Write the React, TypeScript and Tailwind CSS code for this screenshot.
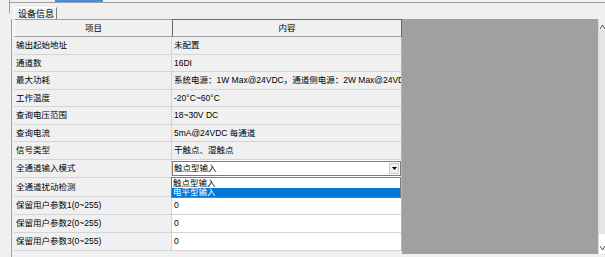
import React from "react";

const rows: { label: string; value: string; h: number; white?: boolean; combo?: boolean }[] = [
  { label: "输出起始地址", value: "未配置", h: 18 },
  { label: "通道数", value: "16DI", h: 17 },
  { label: "最大功耗", value: "系统电源：1W Max@24VDC，通道侧电源：2W Max@24VDC", h: 18 },
  { label: "工作温度", value: "-20°C~60°C", h: 17 },
  { label: "查询电压范围", value: "18~30V DC", h: 18 },
  { label: "查询电流", value: "5mA@24VDC 每通道", h: 17 },
  { label: "信号类型", value: "干触点、湿触点", h: 18 },
  { label: "全通道输入模式", value: "触点型输入", h: 18, white: true, combo: true },
  { label: "全通道扰动检测", value: "", h: 19, white: true },
  { label: "保留用户参数1(0~255)", value: "0", h: 18, white: true },
  { label: "保留用户参数2(0~255)", value: "0", h: 18, white: true },
  { label: "保留用户参数3(0~255)", value: "0", h: 18, white: true },
];

export default function App() {
  return (
    <div className="w-[605px] h-[257px] overflow-hidden bg-[#f0f0f0] text-black text-[8.5px] leading-none font-['Liberation_Sans','Noto_Sans_CJK_SC',sans-serif] flex flex-col">
      {/* top lines */}
      <div className="h-[2px] flex shrink-0">
        <div className="w-[9px]" />
        <div className="w-px bg-[#a0a0a0]" />
        <div className="w-[45px]" />
        <div className="w-[48px] bg-[#3c8ee6]" />
      </div>
      <div className="h-px flex shrink-0">
        <div className="w-[9px]" />
        <div className="w-px bg-[#a0a0a0]" />
        <div className="flex-1 bg-[#a0a0a0]" />
      </div>
      {/* tab strip */}
      <div className="h-[16px] flex shrink-0">
        <div className="w-[9px]" />
        <div className="w-px h-[10px] bg-[#a0a0a0]" />
        <div className="w-[4px]" />
        <div className="mt-[4px] w-[43px] border-l border-t border-r border-l-white border-t-white border-r-[#808080] flex items-center pl-[3px] pt-px text-[9px]">
          设备信息
        </div>
      </div>
      {/* main */}
      <div className="flex flex-1 min-h-0">
        <div className="w-[14px] flex">
          <div className="w-[11px]" />
          <div className="w-px bg-[#a0a0a0]" />
        </div>
        <div className="flex flex-col w-[388px] relative">
          {/* header */}
          <div className="flex h-[18px] shrink-0">
            <div className="w-[158px] border-t border-l border-b border-t-[#a0a0a0] border-l-white border-b-[#a0a0a0] bg-[#f0f0f0] flex items-center justify-center">
              项目
            </div>
            <div className="w-[229px] border-t border-l border-b border-[#a0a0a0] border-l-[#696969] border-t-[#696969] bg-[#f0f0f0] flex items-center justify-center">
              内容
            </div>
            <div className="w-px bg-[#696969]" />
          </div>
          {rows.map((r, i) => (
            <div key={i} className="flex shrink-0" style={{ height: r.h }}>
              <div className="w-[158px] border-b border-r border-[#d4d4d4] bg-[#f0f0f0] flex items-center pl-[2px] whitespace-nowrap overflow-hidden">
                {r.label}
              </div>
              <div
                className={
                  "w-[229px] border-b border-[#d4d4d4] flex items-center whitespace-nowrap overflow-hidden " +
                  (r.white ? "bg-white" : "bg-[#f0f0f0]")
                }
              >
                {r.combo ? (
                  <div className="w-full h-[15px] border border-[#7a7a7a] bg-white flex items-center">
                    <span className="flex-1 pl-[1px]">{r.value}</span>
                    <div className="w-[10px] h-[11px] mr-[1px] bg-[#f0f0f0] border border-[#c8c8c8] flex items-center justify-center">
                      <svg width="5" height="3" viewBox="0 0 5 3">
                        <path d="M0 0h5L2.5 3z" fill="#000" />
                      </svg>
                    </div>
                  </div>
                ) : (
                  <span className="pl-[2px]">{r.value}</span>
                )}
              </div>
              <div className="w-px bg-[#b4b4b4]" />
            </div>
          ))}
          <div className="flex-1 flex">
            <div className="w-[158px] bg-[#f0f0f0]" />
            <div className="w-[229px] bg-[#f0f0f0]" />
          </div>
          {/* dropdown list */}
          <div className="absolute left-[157px] top-[158px] w-[230px] h-[21px] border border-[#7a7a7a] bg-white flex flex-col">
            <div className="h-[10px] flex items-center pl-px">触点型输入</div>
            <div className="h-[9px] bg-[#0078d7] text-white flex items-center pl-px">电平型输入</div>
          </div>
        </div>
        <div className="w-[196px] bg-[#a0a0a0] mb-[3px]" />
        {/* scrollbar */}
        <div className="w-[7px] flex flex-col border-l border-[#dadada] bg-[#f0f0f0] mb-[3px]">
          <div className="h-[10px] flex items-end justify-center">
            <svg width="5" height="4" viewBox="0 0 5 4">
              <path d="M0 4L2.5 0 5 4" fill="none" stroke="#505050" strokeWidth="1" />
            </svg>
          </div>
          <div className="flex-1 bg-[#e6e6e6]" />
          <div className="h-[20px] bg-white flex items-end justify-center pb-[4px]">
            <svg width="5" height="4" viewBox="0 0 5 4">
              <path d="M0 0L2.5 4 5 0" fill="none" stroke="#505050" strokeWidth="1" />
            </svg>
          </div>
        </div>
      </div>
    </div>
  );
}
